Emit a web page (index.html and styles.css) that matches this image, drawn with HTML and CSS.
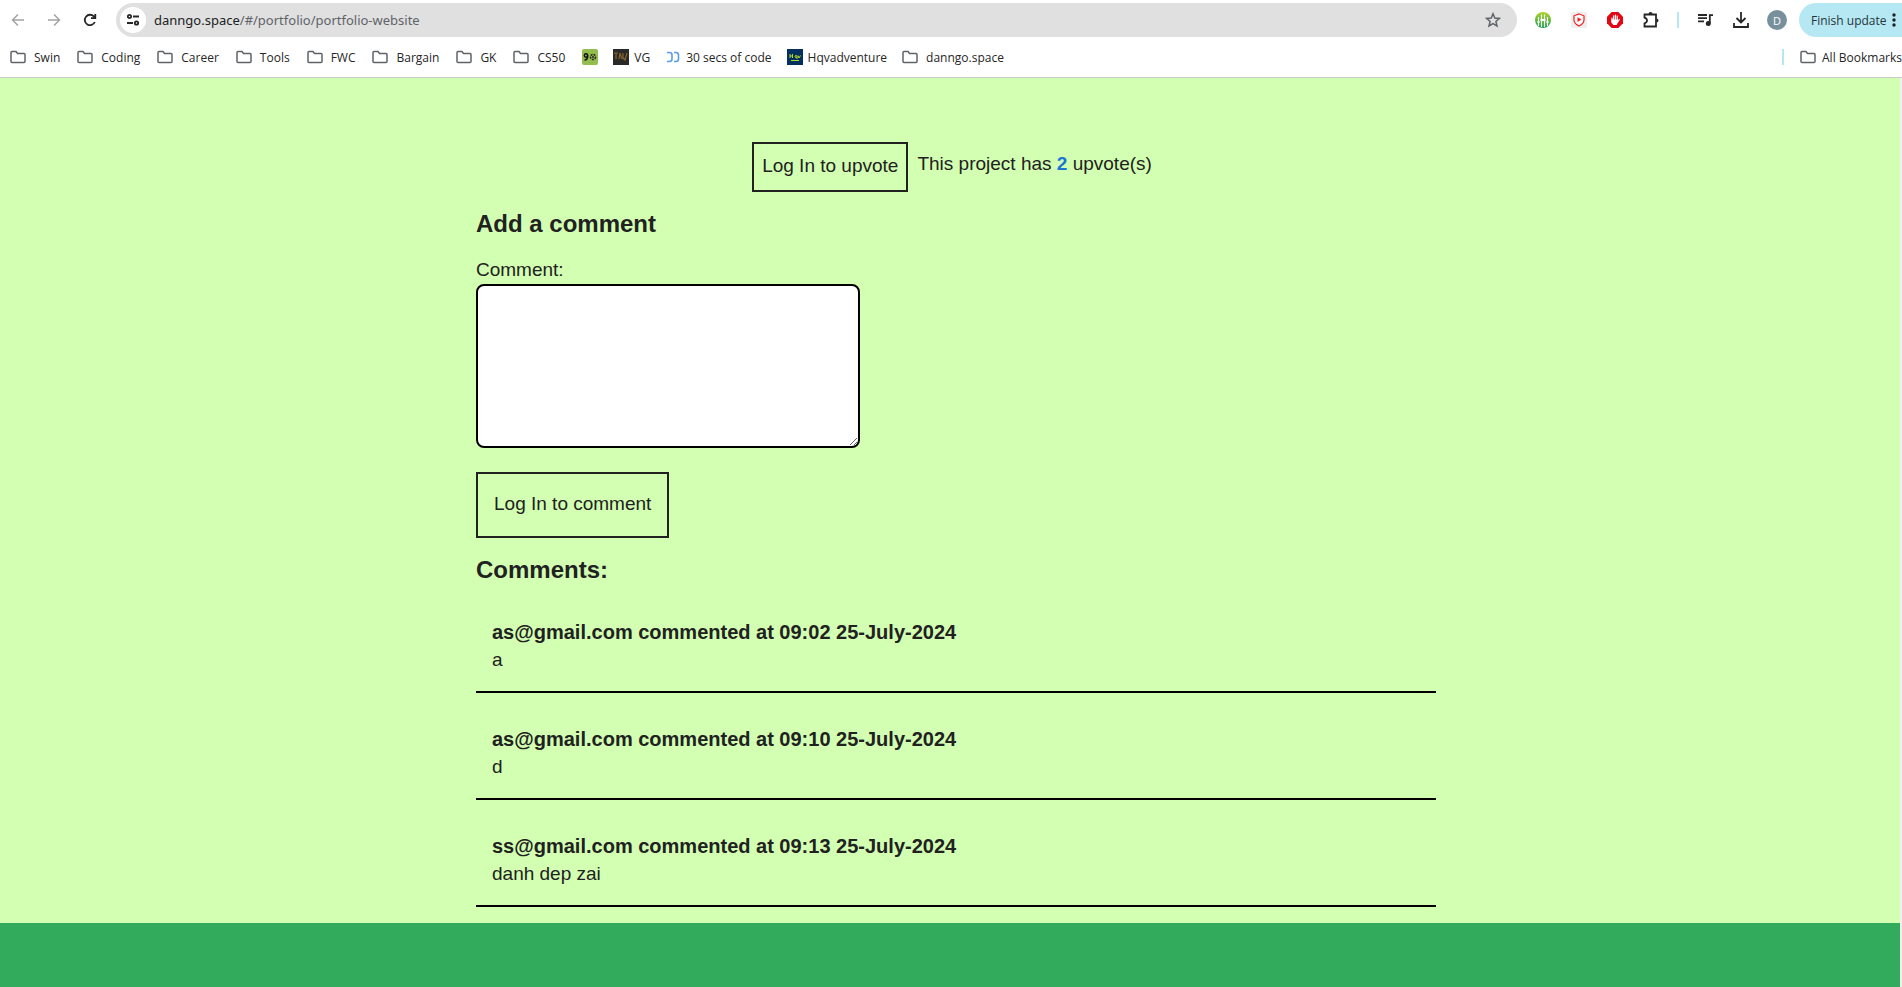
FILE: index.html
```html
<!DOCTYPE html>
<html lang="en">
<head>
<meta charset="utf-8">
<title>danngo.space</title>
<link rel="stylesheet" href="styles.css">
</head>
<body>
<svg class="defs" aria-hidden="true">
  <symbol id="folder" viewBox="0 0 16 16"><path d="M1 12.500V3.500Q1 2.500 2 2.500H6L7.500 4.500H14Q15 4.500 15 5.500V12.500Q15 13.500 14 13.500H2Q1 13.500 1 12.500Z" fill="none" stroke="#5f6368" stroke-width="1.500"/></symbol>
</svg>
<header class="browser">
  <div class="toolbar">
    <button class="icon-btn" aria-label="Back"><svg viewBox="0 0 16 16" class="faded"><path d="M14 8H3M8 2.500L2.500 8L8 13.500"/></svg></button>
    <button class="icon-btn" aria-label="Forward"><svg viewBox="0 0 16 16" class="faded"><path d="M2 8H13M8 2.500L13.500 8L8 13.500"/></svg></button>
    <button class="icon-btn" aria-label="Reload"><svg viewBox="0 0 16 16" class="strong"><path d="M12.800 10A5.200 5.200 0 1 1 11.800 4.400L13 5.600M13.300 2V6.200H9"/></svg></button>
    <div class="omnibox">
      <button class="site-info" aria-label="Site information"><svg viewBox="0 0 16 16" class="strong"><circle cx="4.500" cy="4.500" r="1.700"/><path d="M8 4.500H14M2 11H8"/><circle cx="11.500" cy="11" r="1.700"/></svg></button>
      <span class="url"><span class="host">danngo.space</span>/#/portfolio/portfolio-website</span>
      <button class="icon-btn" aria-label="Bookmark this page"><svg viewBox="0 0 16 16" class="star"><path d="M8 1.800L9.800 6L14.400 6.400L10.900 9.400L12 13.900L8 11.500L4 13.900L5.100 9.400L1.600 6.400L6.200 6Z"/></svg></button>
    </div>
    <div class="extensions">
      <button class="icon-btn" aria-label="Equalizer extension"><svg viewBox="0 0 16 16"><defs><linearGradient id="lime" x2="0" y2="1"><stop stop-color="#b4d32a"/><stop offset="1" stop-color="#14a04a"/></linearGradient></defs><circle cx="8" cy="8" r="8" fill="url(#lime)"/><path d="M3.500 5V14M6.500 2.500V15M9.500 2.500V15M12.500 5V14" stroke="#fff" stroke-width="1.200"/><path d="M2.500 10H4.500M5.500 8H10.500M11.500 10H13.500" stroke="#fff" stroke-width="1.800"/></svg></button>
      <button class="icon-btn" aria-label="Video shield extension"><svg viewBox="0 0 16 16"><rect width="16" height="16" rx="2" fill="#eee"/><path d="M8 2L13 3.800V8Q13 11.500 8 14Q3 11.500 3 8V3.800Z" fill="#fff" stroke="#f21d1d" stroke-width="1.200"/><path d="M6.500 5.300L10.500 7.600L6.500 10Z" fill="#f21d1d"/></svg></button>
      <button class="icon-btn" aria-label="Ad blocker"><svg viewBox="0 0 16 16"><path d="M4.700 0H11.300L16 4.700V11.300L11.300 16H4.700L0 11.300V4.700Z" fill="#e30613"/><path d="M5 6V9.500M6.700 8V3.800M8.500 8V3M10.300 8V4M10.800 10L12.300 7.500" fill="none" stroke="#fff" stroke-width="1.200" stroke-linecap="round"/><path d="M4.400 7.500H11V10L9.800 13H6.200L4.400 10.500Z" fill="#fff"/></svg></button>
      <button class="icon-btn" aria-label="Extensions"><svg viewBox="0 0 16 16" class="strong puzzle"><path d="M1.500 2.500H13V14.500H1.500V11.300Q4 10.500 4 8.500T1.500 5.700Z"/><path class="solid" d="M5.500 2A2 2 0 0 1 9.500 2ZM13.500 6.500A2 2 0 0 1 13.500 10.500Z"/></svg></button>
      <span class="divider"></span>
      <button class="icon-btn" aria-label="Media controls"><svg viewBox="0 0 16 16" class="strong"><path d="M1 3H10M1 6.200H10M1 9.400H7M12.800 11.500V3.200H16"/><circle cx="11.300" cy="11.500" r="1.600" fill="#262626"/></svg></button>
      <button class="icon-btn" aria-label="Downloads"><svg viewBox="0 0 16 16" class="strong"><path d="M8 0V10M3.500 6L8 10.500L12.500 6M1 11V15H15V11"/></svg></button>
      <button class="avatar" aria-label="Profile">D</button>
    </div>
    <button class="update">Finish update<svg viewBox="0 0 4 16"><circle cx="2" cy="3" r="1.700"/><circle cx="2" cy="8" r="1.700"/><circle cx="2" cy="13" r="1.700"/></svg></button>
  </div>
  <nav class="bookmarks">
    <a href="#"><svg><use href="#folder"/></svg>Swin</a>
    <a href="#"><svg><use href="#folder"/></svg>Coding</a>
    <a href="#"><svg><use href="#folder"/></svg>Career</a>
    <a href="#"><svg><use href="#folder"/></svg>Tools</a>
    <a href="#"><svg><use href="#folder"/></svg>FWC</a>
    <a href="#"><svg><use href="#folder"/></svg>Bargain</a>
    <a href="#"><svg><use href="#folder"/></svg>GK</a>
    <a href="#"><svg><use href="#folder"/></svg>CS50</a>
    <a href="#" class="site" aria-label="Nine"><svg viewBox="0 0 16 16"><rect width="16" height="16" rx="2" fill="#93bd4e"/><circle cx="4" cy="6.500" r="1.700" fill="none" stroke="#111" stroke-width="1.500"/><path d="M5.700 6.500Q5.700 11 2.500 11" fill="none" stroke="#111" stroke-width="1.500"/><circle cx="11" cy="8" r="2.500" fill="none" stroke="#222" stroke-width="1.500" stroke-dasharray="2 1"/><circle cx="11" cy="8" r="1" fill="#222"/></svg></a>
    <a href="#" class="site"><svg viewBox="0 0 16 16"><rect width="16" height="16" fill="#2b2927"/><path d="M1 4H5M3 4V10M6 10L7 4L9 10M10 4V9L12 11L14 4" fill="none" stroke="#85652f" stroke-width="1.200"/></svg>VG</a>
    <a href="#" class="site"><svg viewBox="0 0 16 16"><path d="M2 3.500H4.500Q7 3.500 7 6V10Q7 12.500 4.500 12.500H2M9 3.500H11Q13.500 3.500 13.500 6V10Q13.500 12.500 11 12.500H9" fill="none" stroke="#5c9bf0" stroke-width="1.600"/></svg>30 secs of code</a>
    <a href="#" class="site"><svg viewBox="0 0 16 16"><rect width="16" height="16" fill="#04305f"/><path d="M3 5V9M5.500 5V9M3 7H5.500M10 7.500A1 1 0 1 0 8 7.500A1 1 0 1 0 10 7.500V10M11 6.500L12 9L13.500 6.500M4 11.500H12" fill="none" stroke="#b2dc21" stroke-width="1"/></svg>Hqvadventure</a>
    <a href="#"><svg><use href="#folder"/></svg>danngo.space</a>
    <span class="divider"></span>
    <a href="#" class="all"><svg><use href="#folder"/></svg>All Bookmarks</a>
  </nav>
</header>
<div class="page">
  <main class="content">
    <div class="upvotes">
      <button class="outline small">Log In to upvote</button>
      <p>This project has <strong>2</strong> upvote(s)</p>
    </div>
    <h2>Add a comment</h2>
    <form class="comment-form">
      <label for="comment">Comment:</label>
      <textarea id="comment"></textarea>
      <button type="button" class="outline large">Log In to comment</button>
    </form>
    <h2>Comments:</h2>
    <article class="comment"><h3>as@gmail.com commented at 09:02 25-July-2024</h3><p>a</p></article>
    <article class="comment"><h3>as@gmail.com commented at 09:10 25-July-2024</h3><p>d</p></article>
    <article class="comment"><h3>ss@gmail.com commented at 09:13 25-July-2024</h3><p>danh dep zai</p></article>
  </main>
  <footer class="footer"></footer>
</div>
</body>
</html>
```
FILE: styles.css
```css
* { box-sizing: border-box; }
body {
  margin: 0;
  min-height: 100vh;
  display: flex;
  flex-direction: column;
  overflow-x: hidden;
  background: #f1f1f1;
  font-family: "Liberation Sans", Arial, sans-serif;
  color: #212121;
}
h2, h3, p { margin: 0; }
button { font: inherit; color: inherit; background: none; border: 0; padding: 0; }
.defs { position: absolute; width: 0; height: 0; }

.browser {
  background: #fff;
  border-bottom: 1px solid #c8c8c8;
  font-family: "Open Sans", sans-serif;
  font-size: 12px;
}
.toolbar { display: flex; align-items: center; padding: 3px 0; }
.icon-btn { display: flex; justify-content: center; align-items: center; width: 36px; height: 34px; flex: none; }
.icon-btn svg, .site-info svg { width: 16px; height: 16px; fill: none; }
.faded { stroke: #a3a3a3; stroke-width: 1.5; }
.strong { stroke: #262626; stroke-width: 1.8; }
.puzzle { overflow: visible; }
.solid { fill: #262626; stroke: none; }
.star { stroke: #5f6368; stroke-width: 1.5; }
.omnibox {
  flex: 1;
  display: flex;
  align-items: center;
  height: 34px;
  margin-left: 8px;
  padding: 0 6px 0 4px;
  border-radius: 17px;
  background: #e0e0e0;
}
.site-info { display: flex; align-items: center; justify-content: center; width: 26px; height: 26px; border-radius: 50%; background: #fff; }
.url { flex: 1; padding-left: 8px; font-family: "Noto Sans", sans-serif; font-size: 13px; color: #5f6368; }
.host { color: #202124; }
.extensions { display: flex; align-items: center; padding: 0 12px 0 8px; }
.divider { width: 2px; height: 16px; background: #b5e8f3; }
.extensions .divider { margin: 0 8px; }
.avatar { width: 20px; height: 20px; margin-left: 8px; border-radius: 50%; background: #78909c; color: #fff; font-size: 11px; }
.update {
  display: flex;
  align-items: center;
  justify-content: space-between;
  width: 103px;
  height: 34px;
  padding: 0 6px 0 12px;
  border-radius: 17px 0 0 17px;
  background: #b5e8f3;
  color: #25343a;
}
.update svg { width: 4px; height: 16px; fill: #202124; }
.bookmarks { display: flex; align-items: center; height: 37px; padding-left: 10px; padding-bottom: 3px; white-space: nowrap; }
.bookmarks a { display: flex; align-items: center; gap: 8px; margin-right: 17px; color: #262626; text-decoration: none; }
.bookmarks .site { gap: 5px; margin-right: 15px; }
.bookmarks svg { width: 16px; height: 16px; }
.bookmarks .divider { margin: 0 16px 0 auto; }
.bookmarks .all { gap: 6px; margin-right: 0; }

.page { flex: 1; display: flex; flex-direction: column; margin-right: 2px; background: #d3ffb2; font-size: 19px; line-height: 28px; }
.content { width: 100%; max-width: 972px; margin: 0 auto; padding: 64px 0 16px 12px; }
.upvotes { display: flex; justify-content: center; gap: 9px; margin-bottom: 16px; padding-right: 8px; }
.upvotes p { padding-top: 8px; }
.upvotes strong { color: #1976d2; }
.outline { border: 2px solid #212121; }
.small { padding: 8px 8px 10px; line-height: 28px; }
.large { padding: 17px 16px 20px; line-height: 25px; }
h2 { font-size: 24px; line-height: 32px; }
.comment-form { display: flex; flex-direction: column; align-items: flex-start; padding: 16px 0; }
.comment-form textarea { width: 384px; max-width: 100%; height: 164px; margin-bottom: 24px; border: 2px solid #000; border-radius: 8px; background: #fff; }
.comment { padding: 32px 16px 17px; border-bottom: 2px solid #000; }
h3 { font-size: 20px; line-height: 28px; }
.footer { flex: 1; background: #32ab5d; }
```
